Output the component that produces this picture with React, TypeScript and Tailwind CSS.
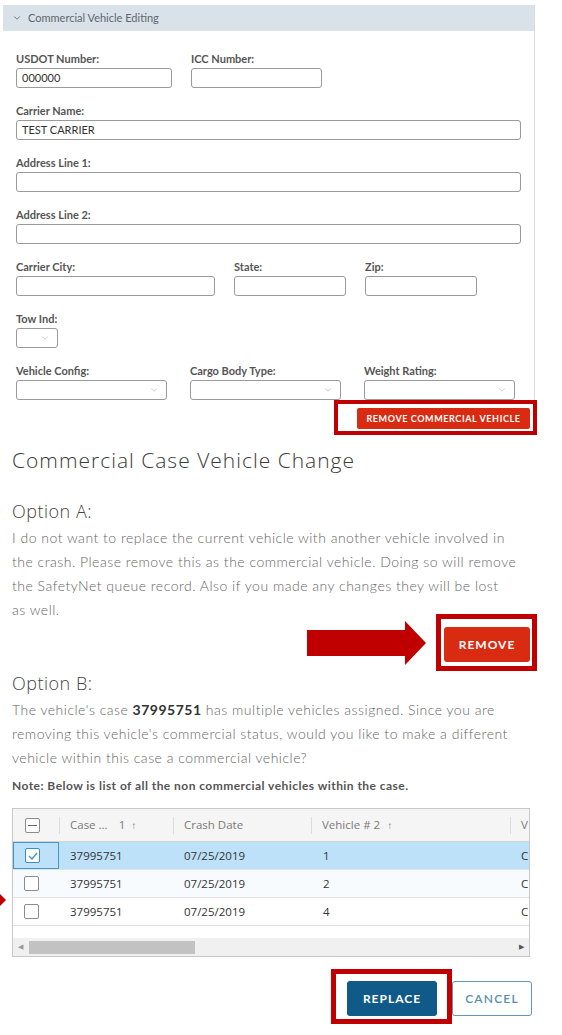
import { ChevronDown } from "lucide-react";
import { ReactNode } from "react";

const Field = ({
  label,
  className,
  value,
  select,
}: {
  label: string;
  className: string;
  value?: string;
  select?: boolean;
}) => {
  return (
    <div className={"flex flex-col " + className}>
      <div className="h-[14px] text-[11px] leading-[14px] font-bold text-[#555]">{label}</div>
      <div className="mt-[2px] h-[20px] border border-[#9a9a9a] rounded-[3px] flex items-center justify-between pl-[5px] pr-[7px] text-[11px] text-[#333]">
        <span>{value}</span>
        {select && <ChevronDown size={10} strokeWidth={1.2} className="text-[#999]" />}
      </div>
    </div>
  );
};

const Checkbox = ({ checked, minus }: { checked?: boolean; minus?: boolean }) => (
  <div
    className={
      "w-[15px] h-[15px] rounded-[2px] border bg-white flex items-center justify-center " +
      (checked ? "border-[#3b8bd0]" : "border-[#8c8c8c]")
    }
  >
    {checked && (
      <svg width="10" height="8" viewBox="0 0 10 8">
        <path d="M1 4 L4 7 L9 1" fill="none" stroke="#3b8bd0" strokeWidth="1.2" />
      </svg>
    )}
    {minus && <div className="w-[9px] h-[1px] bg-[#666]" />}
  </div>
);

const rows = [
  { vehicle: "1", selected: true, bg: "bg-[#bde1f8]" },
  { vehicle: "2", selected: false, bg: "bg-[#f8fbfe]" },
  { vehicle: "4", selected: false, bg: "bg-white" },
];

const cols = "grid grid-cols-[46px_114px_138px_199px_60px]";

const HeadCell = ({ children, divider }: { children?: ReactNode; divider?: boolean }) => (
  <div className="relative flex items-center pl-[11px] h-full">
    {divider && <div className="absolute left-0 top-[8px] h-[17px] w-px bg-[#dcdcdc]" />}
    {children}
  </div>
);

const VehicleTable = () => {
  return (
    <div className="relative mt-[14px] w-[518px] border border-[#c8c8c8] overflow-hidden font-['Open_Sans',sans-serif] text-[11.5px]">
      <div className={cols + " h-[33px] bg-[#f5f5f5] border-b border-[#d4d4d4] text-[#7a7a7a]"}>
        <div className="flex items-center pl-[12px]">
          <Checkbox minus />
        </div>
        <HeadCell divider>
          <span>Case ...</span>
          <span className="ml-[11px]">1</span>
          <span className="ml-[6px] text-[10px]">↑</span>
        </HeadCell>
        <HeadCell divider>Crash Date</HeadCell>
        <HeadCell divider>
          <span>Vehicle # 2</span>
          <span className="ml-[7px] text-[10px]">↑</span>
        </HeadCell>
        <HeadCell divider>V</HeadCell>
      </div>
      {rows.map((row) => (
        <div key={row.vehicle} className={cols + " h-[28px] border-b border-[#e2e2e2] text-[#333] " + row.bg}>
          <div
            className={
              "flex items-center pl-[11px] " + (row.selected ? "border border-[#4595d6]" : "")
            }
          >
            <Checkbox checked={row.selected} />
          </div>
          <div className="flex items-center pl-[11px]">37995751</div>
          <div className="flex items-center pl-[11px]">07/25/2019</div>
          <div className="flex items-center pl-[12px]">{row.vehicle}</div>
          <div className="flex items-center pl-[11px]">C</div>
        </div>
      ))}
      <div className="h-[12px]" />
      <div className="h-[18px] bg-[#f0f0f0] flex items-center">
        <span className="ml-[5px] text-[7px] text-[#9a9a9a]">◀</span>
        <div className="ml-[6px] w-[166px] h-[13px] bg-[#c2c2c2]" />
        <span className="ml-auto mr-[5px] text-[7px] text-[#555]">▶</span>
      </div>
    </div>
  );
};

export default function App() {
  return (
    <div className="relative w-[562px] h-[1035px] bg-white overflow-hidden font-[Lato,sans-serif]">
      <div className="pt-[5px]">
        <div className="ml-[3px] w-[532px] border-r border-[#dcdcdc]">
          <div className="h-[26px] bg-[#d9e2e9] flex items-center pl-[9px] gap-[6px] text-[11px] text-[#5d666e]">
            <ChevronDown size={10} strokeWidth={2} />
            <span>Commercial Vehicle Editing</span>
          </div>
          <div className="pl-[13px] pt-[21px] flex flex-col gap-[16px]">
            <div className="flex gap-[19px]">
              <Field label="USDOT Number:" className="w-[156px]" value="000000" />
              <Field label="ICC Number:" className="w-[131px]" />
            </div>
            <Field label="Carrier Name:" className="w-[505px]" value="TEST CARRIER" />
            <Field label="Address Line 1:" className="w-[505px]" />
            <Field label="Address Line 2:" className="w-[505px]" />
            <div className="flex gap-[19px]">
              <Field label="Carrier City:" className="w-[199px]" />
              <Field label="State:" className="w-[112px]" />
              <Field label="Zip:" className="w-[112px]" />
            </div>
            <Field label="Tow Ind:" className="w-[42px]" select />
            <div className="flex gap-[23px]">
              <Field label="Vehicle Config:" className="w-[151px]" select />
              <Field label="Cargo Body Type:" className="w-[151px]" select />
              <Field label="Weight Rating:" className="w-[151px]" select />
            </div>
          </div>
        </div>
        <div className="w-[537px] flex justify-end">
          <div className="flex border-[4px] border-[#c00000] pl-[19px] pr-[3px] pt-[4px] pb-[2px]">
            <button className="w-[173px] h-[21px] bg-[#d92b12] rounded-[2px] text-white text-[9px] font-bold tracking-[0.6px]">
              REMOVE COMMERCIAL VEHICLE
            </button>
          </div>
        </div>
      </div>

      <div className="pl-[12px]">
        <h1 className="mt-[11px] text-[21px] leading-[28px] font-light tracking-[1px] text-[#3a3a3a] font-['Open_Sans',sans-serif]">
          Commercial Case Vehicle Change
        </h1>
        <h2 className="mt-[25px] text-[18px] leading-[24px] font-light tracking-[0.5px] text-[#444] font-['Open_Sans',sans-serif]">
          Option A:
        </h2>
        <p className="mt-[3px] w-[525px] text-[14px] leading-[24px] tracking-[0.5px] font-light text-[#666]">
          I do not want to replace the current vehicle with another vehicle involved in
          <br />
          the crash. Please remove this as the commercial vehicle. Doing so will remove
          <br />
          the SafetyNet queue record. Also if you made any changes they will be lost
          <br />
          as well.
        </p>
        <div className="-mt-[8px] w-[525px] flex justify-end items-center">
          <svg width="119" height="44" viewBox="0 0 119 44">
            <path d="M0 9 H98 V0 L119 22 L98 44 V35 H0 Z" fill="#c00000" />
          </svg>
          <div className="ml-[10px] flex border-[5px] border-[#c00000] pl-[3px] pr-[2px] pt-[8px] pb-[4px]">
            <button className="w-[86px] h-[35px] bg-[#d92b12] rounded-[3px] text-white text-[12px] font-bold tracking-[1px]">
              REMOVE
            </button>
          </div>
        </div>
        <h2 className="text-[18px] leading-[24px] font-light tracking-[0.5px] text-[#444] font-['Open_Sans',sans-serif]">
          Option B:
        </h2>
        <p className="mt-[3px] w-[521px] text-[14px] leading-[24px] tracking-[0.5px] font-light text-[#666]">
          The vehicle's case <b className="font-bold text-[#333]">37995751</b> has multiple vehicles
          assigned. Since you are removing this vehicle's commercial status, would you like to make
          a different vehicle within this case a commercial vehicle?
        </p>
        <p className="mt-[8px] text-[12px] leading-[16px] font-bold tracking-[0.45px] text-[#555]">
          Note: Below is list of all the non commercial vehicles within the case.
        </p>
        <div className="relative">
          <svg className="absolute left-[-12px] top-[86px]" width="6" height="12" viewBox="0 0 6 12">
            <path d="M0 0 L6 6 L0 12 Z" fill="#c00000" />
          </svg>
          <VehicleTable />
        </div>
        <div className="mt-[12px] w-[520px] flex justify-end items-start">
          <div className="flex border-[5px] border-[#c00000] pl-[11px] pr-[10px] pt-[7px] pb-[3px]">
            <button className="w-[90px] h-[35px] bg-[#0f5a88] rounded-[3px] text-white text-[12px] font-bold tracking-[1px]">
              REPLACE
            </button>
          </div>
          <button className="mt-[12px] w-[80px] h-[35px] border border-[#5f97b8] rounded-[3px] text-[#5a8ea8] text-[12px] font-semibold tracking-[1.2px]">
            CANCEL
          </button>
        </div>
      </div>
    </div>
  );
}
